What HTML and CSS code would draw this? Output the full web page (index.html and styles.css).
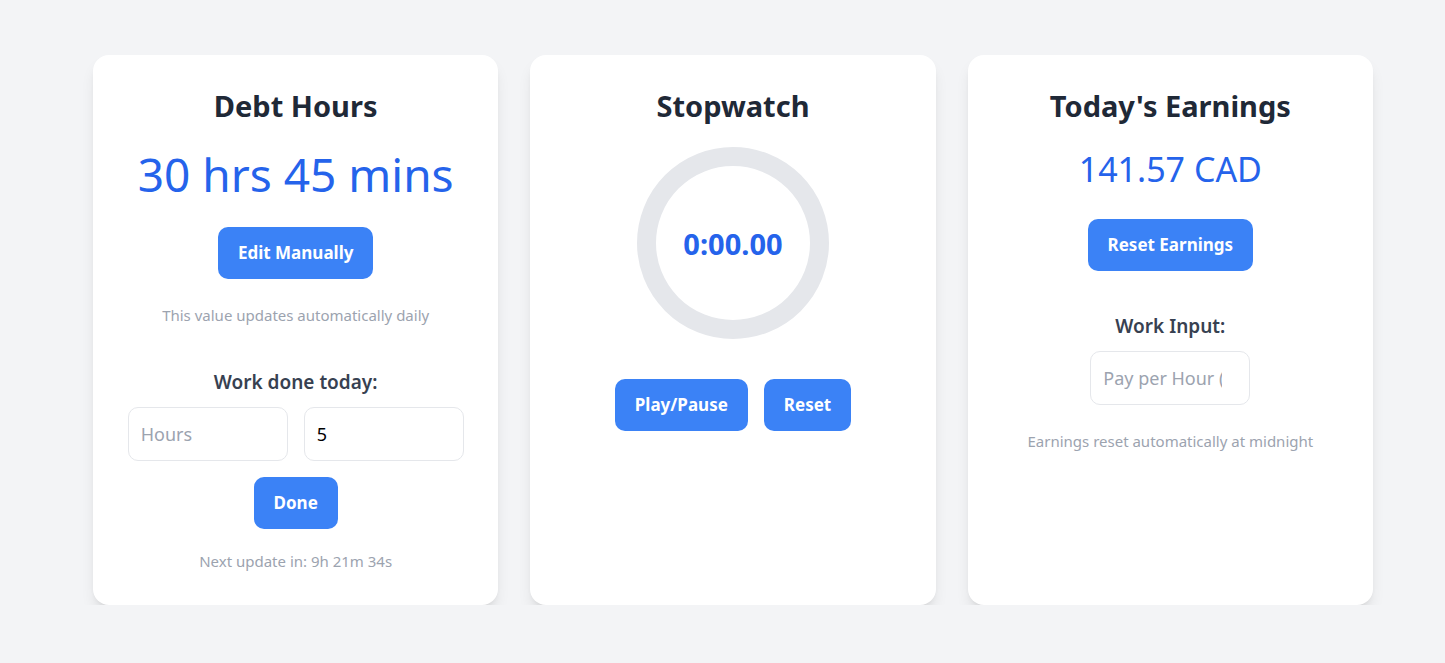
FILE: index.html
```html
<!DOCTYPE html>
<html lang="en">
<head>
<meta charset="utf-8">
<title>Work Tracker</title>
<link rel="stylesheet" href="styles.css">
</head>
<body>
<main class="grid">
  <section class="card">
    <h2 class="title">Debt Hours</h2>
    <div class="debt-value">30 hrs 45 mins</div>
    <button class="btn btn-edit">Edit Manually</button>
    <p class="note note-auto">This value updates automatically daily</p>
    <h3 class="label label-work">Work done today:</h3>
    <div class="input-row">
      <input class="field" type="number" placeholder="Hours">
      <input class="field" type="number" value="5">
    </div>
    <button class="btn btn-done">Done</button>
    <p class="note note-next">Next update in: 9h 21m 34s</p>
  </section>

  <section class="card">
    <h2 class="title">Stopwatch</h2>
    <div class="ring">
      <span class="ring-time">0:00.00</span>
    </div>
    <div class="btn-row">
      <button class="btn">Play/Pause</button>
      <button class="btn">Reset</button>
    </div>
  </section>

  <section class="card">
    <h2 class="title">Today's Earnings</h2>
    <div class="earn-value">141.57 CAD</div>
    <button class="btn btn-reset-earn">Reset Earnings</button>
    <h3 class="label label-input">Work Input:</h3>
    <input class="field field-pay" type="number" placeholder="Pay per Hour ($)">
    <p class="note note-midnight">Earnings reset automatically at midnight</p>
  </section>
</main>
</body>
</html>
```

FILE: styles.css
```css
* { box-sizing: border-box; }

html, body {
  margin: 0;
  padding: 0;
  background: #f3f4f6;
  font-family: "Noto Sans", "Open Sans", sans-serif;
  color: #1f2937;
}

.grid {
  display: grid;
  grid-template-columns: repeat(3, 1fr);
  gap: 32px;
  width: 1280px;
  margin: 55px 0 0 93px;
}

.card {
  background: #ffffff;
  border-radius: 16px;
  box-shadow: 0 10px 15px -3px rgba(0,0,0,0.10), 0 4px 6px -4px rgba(0,0,0,0.10);
  padding: 33px 32px 34px;
  display: flex;
  flex-direction: column;
  align-items: center;
  text-align: center;
}

.title {
  margin: 0;
  font-size: 29px;
  line-height: 36px;
  font-weight: 700;
  color: #1f2937;
}

.debt-value {
  margin-top: 23px;
  font-size: 46px;
  line-height: 54px;
  color: #2563eb;
}

.earn-value {
  margin-top: 25px;
  font-size: 34px;
  line-height: 40px;
  color: #2563eb;
}

.btn {
  border: none;
  background: #3b82f6;
  color: #ffffff;
  font-family: inherit;
  font-weight: 700;
  font-size: 17px;
  line-height: 28px;
  padding: 12px 20px;
  border-radius: 10px;
  cursor: pointer;
}

.btn-edit { margin-top: 26px; }
.btn-done { margin-top: 16px; }
.btn-reset-earn { margin-top: 30px; }

.note {
  margin: 0;
  font-size: 15px;
  line-height: 20px;
  color: #9ca3af;
}

.note-auto { margin-top: 26px; }
.note-next { margin-top: 22px; }
.note-midnight { margin-top: 26px; }

.label {
  margin: 0;
  font-size: 19px;
  line-height: 28px;
  font-weight: 600;
  color: #374151;
}

.label-work { margin-top: 43px; }
.label-input { margin-top: 41px; }

.input-row {
  margin-top: 11px;
  display: flex;
  gap: 16px;
}

.field {
  width: 160px;
  height: 54px;
  border: 1px solid #e5e7eb;
  border-radius: 10px;
  padding: 0 12px;
  font-family: inherit;
  font-size: 18px;
  color: #000000;
  background: #ffffff;
  outline: none;
}

.field::placeholder { color: #9ca3af; }

.field-pay { margin-top: 11px; }

.ring {
  margin-top: 23px;
  width: 192px;
  height: 192px;
  border-radius: 50%;
  border: 19px solid #e5e7eb;
  display: flex;
  align-items: center;
  justify-content: center;
}

.ring-time {
  font-size: 29px;
  font-weight: 700;
  color: #2563eb;
}

.btn-row {
  margin-top: 40px;
  display: flex;
  gap: 16px;
}
```
